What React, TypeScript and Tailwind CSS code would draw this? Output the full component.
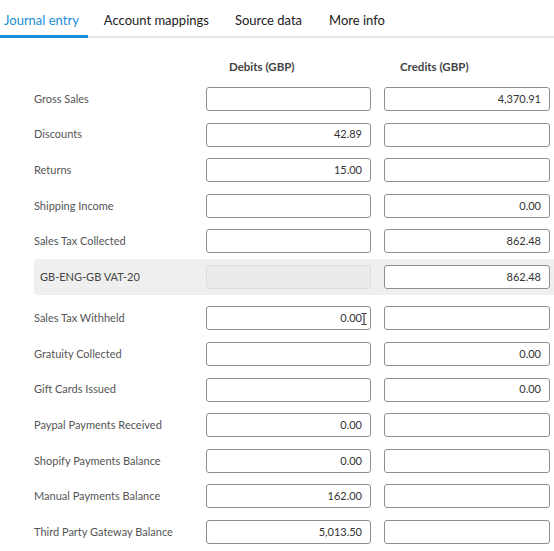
import React from "react";

type Row = { label: string; debit?: string; credit?: string; band?: boolean; disabledDebit?: boolean; cursor?: boolean };

const rows: Row[] = [
  { label: "Gross Sales", credit: "4,370.91" },
  { label: "Discounts", debit: "42.89" },
  { label: "Returns", debit: "15.00" },
  { label: "Shipping Income", credit: "0.00" },
  { label: "Sales Tax Collected", credit: "862.48" },
  { label: "GB-ENG-GB VAT-20", credit: "862.48", band: true, disabledDebit: true },
  { label: "Sales Tax Withheld", debit: "0.00", cursor: true },
  { label: "Gratuity Collected", credit: "0.00" },
  { label: "Gift Cards Issued", credit: "0.00" },
  { label: "Paypal Payments Received", debit: "0.00" },
  { label: "Shopify Payments Balance", debit: "0.00" },
  { label: "Manual Payments Balance", debit: "162.00" },
  { label: "Third Party Gateway Balance", debit: "5,013.50" },
];

function Box({ value, disabled, cursor }: { value?: string; disabled?: boolean; cursor?: boolean }) {
  return (
    <div
      className={
        "relative h-[24px] flex items-center justify-end pr-[8px] rounded-[3px] border text-[11px] text-[#333] " +
        (disabled ? "bg-[#ebebeb] border-[#dcdcdc]" : "bg-white border-[#8e8e93]")
      }
    >
      {value}
      {cursor && (
        <svg className="absolute right-[3px] top-[6px]" width="6" height="12" viewBox="0 0 6 12">
          <path d="M0.5 0.5 H2.5 L3 1 L3.5 0.5 H5.5 M3 1 V11 M0.5 11.5 H2.5 L3 11 L3.5 11.5 H5.5" stroke="#fff" strokeWidth="2" fill="none" />
          <path d="M0.5 0.5 H2.5 L3 1 L3.5 0.5 H5.5 M3 1 V11 M0.5 11.5 H2.5 L3 11 L3.5 11.5 H5.5" stroke="#222" strokeWidth="1" fill="none" />
        </svg>
      )}
    </div>
  );
}

export default function App() {
  const tabs = ["Journal entry", "Account mappings", "Source data", "More info"];
  const pads = [
    "pl-[4px] pr-[9px] text-[#1a8dd8] border-[#1a8dd8]",
    "pl-[16px] pr-[12px] text-[#222] border-transparent",
    "pl-[14px] pr-[13px] text-[#222] border-transparent",
    "pl-[14px] pr-[14px] text-[#222] border-transparent",
  ];
  return (
    <div className="w-[554px] h-[551px] overflow-hidden bg-white" style={{ fontFamily: "Lato, 'Noto Sans', sans-serif" }}>
      <div className="flex h-[38px] border-b-[2px] border-[#e6e6ea]">
        {tabs.map((t, i) => (
          <div key={t} className={"h-[38px] flex items-center text-[13px] -mb-[2px] pt-[7px] border-b-[3px] " + pads[i]}>
            {t}
          </div>
        ))}
      </div>
      <div className="pl-[34px] pr-[4px]">
        <div className="flex h-[20px] mt-[19px] items-center text-[11.5px] font-bold text-[#444]">
          <div className="w-[172px]" />
          <div className="w-[165px] pl-[23px]">Debits (GBP)</div>
          <div className="w-[166px] ml-[13px] pl-[16px]">Credits (GBP)</div>
        </div>
        <div className="flex flex-col mt-[10px]">
          {rows.map((r) =>
            r.band ? (
              <div key={r.label} className="flex items-center bg-[#efefef] rounded-[4px] pl-[6px] py-[6px] mr-[-10px] pr-[10px] mt-[-5.6px] mb-[11px]">
                <div className="w-[166px] text-[11px] text-[#444]">{r.label}</div>
                <div className="w-[165px]">
                  <Box disabled />
                </div>
                <div className="w-[166px] ml-[13px]">
                  <Box value={r.credit} />
                </div>
              </div>
            ) : (
              <div key={r.label} className="flex items-center mb-[11.6px]">
                <div className="w-[172px] text-[11px] text-[#555]">{r.label}</div>
                <div className="w-[165px]">
                  <Box value={r.debit} cursor={r.cursor} />
                </div>
                <div className="w-[166px] ml-[13px]">
                  <Box value={r.credit} />
                </div>
              </div>
            )
          )}
        </div>
      </div>
    </div>
  );
}
